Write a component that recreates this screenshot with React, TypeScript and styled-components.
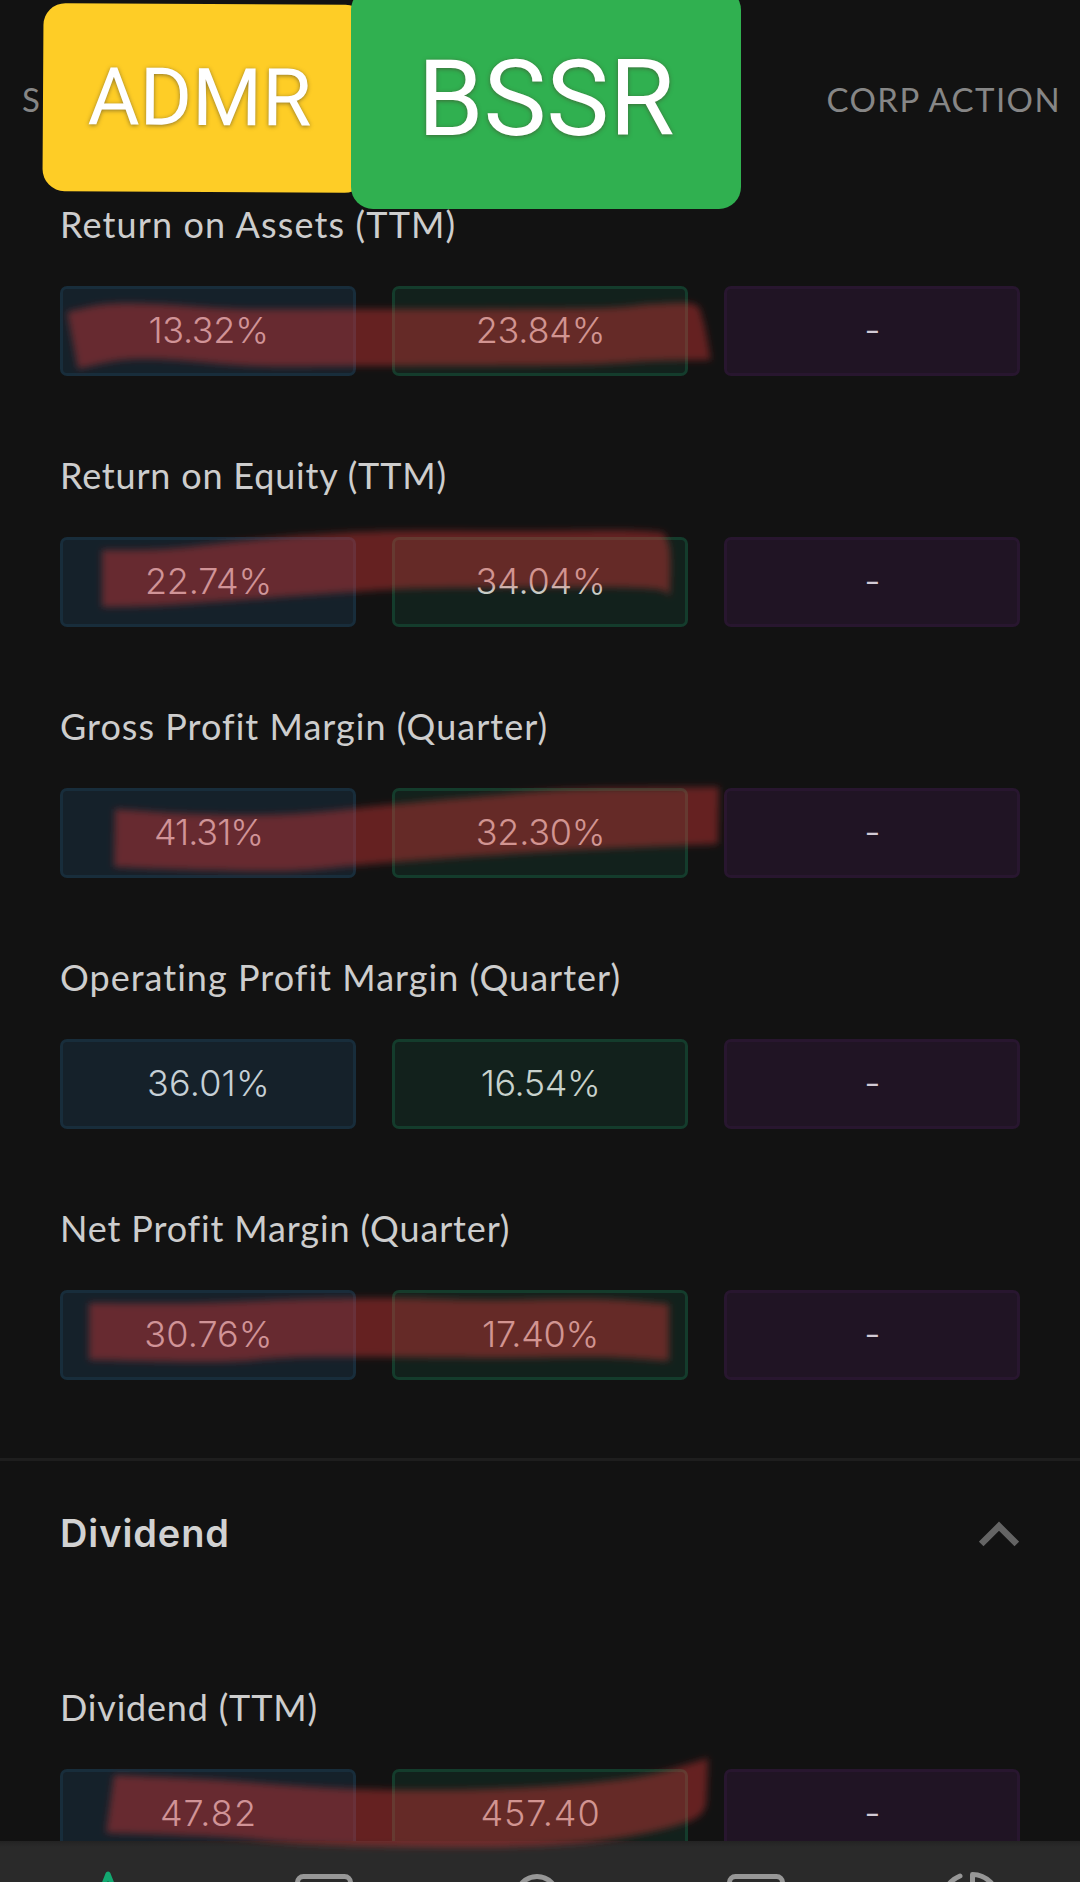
import React from 'react';
import styled, { createGlobalStyle } from 'styled-components';

const GlobalStyle = createGlobalStyle`
  html, body { margin: 0; background: #121212; }
  body { overflow: hidden; }
  * { box-sizing: border-box; }
`;

const Screen = styled.main`
  position: relative;
  display: flex;
  flex-direction: column;
  width: 1080px;
  height: 1882px;
  overflow: hidden;
  background: #121212;
  color: #cdcdcd;
  font-family: Lato, 'Open Sans', sans-serif;
`;

const TabBar = styled.header`
  display: flex;
  flex: none;
  justify-content: space-between;
  align-items: center;
  height: 199px;
  padding: 0 19px 1px 22px;
`;

const Tab = styled.span`
  font-size: 33px;
  line-height: 40px;
  letter-spacing: 1.4px;
  color: #868686;
  white-space: nowrap;
`;

const Content = styled.div`
  display: flex;
  flex: 1;
  flex-direction: column;
  min-height: 0;
  overflow: hidden;
`;

const MetricGroup = styled.section`
  display: flex;
  flex: none;
  flex-direction: column;
  gap: 60px;
  padding: 0 60px;
`;

const Metric = styled.article`
  display: flex;
  flex-direction: column;
  gap: 37px;
  height: 191px;
`;

const MetricLabel = styled.h3<{ $tracking: number }>`
  flex: none;
  margin: 0;
  height: 50px;
  font-size: 36px;
  font-weight: 400;
  line-height: 50px;
  letter-spacing: ${(p) => p.$tracking}px;
  white-space: nowrap;
`;

const ValueRow = styled.div`
  display: grid;
  grid-template-columns: repeat(3, 296px);
  column-gap: 36px;
`;

type Tone = 'blue' | 'green' | 'purple';

const tones: Record<Tone, { fill: string; edge: string; text: string }> = {
  blue: { fill: '#15212a', edge: '#182d3b', text: '#c6d0d6' },
  green: { fill: '#12211c', edge: '#143c2c', text: '#c8d2cc' },
  purple: { fill: '#201424', edge: '#28162f', text: '#d3cbd6' },
};

const ValueBox = styled.div<{ $tone: Tone; $tracking?: number }>`
  display: flex;
  align-items: center;
  justify-content: center;
  height: 90px;
  padding: 0 0 2px 1px;
  border: 3px solid ${(p) => tones[p.$tone].edge};
  border-radius: 7px;
  background: ${(p) => tones[p.$tone].fill};
  color: ${(p) => tones[p.$tone].text};
  font-family: Inter, sans-serif;
  font-size: 36px;
  font-weight: 350;
  line-height: 44px;
  letter-spacing: ${(p) => p.$tracking ?? 0}px;
`;

const SectionHeader = styled.div`
  display: flex;
  flex: none;
  align-items: center;
  justify-content: space-between;
  height: 149px;
  margin-top: 64px;
  padding: 0 61px 0 60px;
  border-top: 3px solid #1e1e1e;
`;

const SectionTitle = styled.h2`
  margin: 0;
  padding-bottom: 2px;
  font-family: Inter, sans-serif;
  font-size: 38px;
  font-weight: 600;
  line-height: 48px;
  letter-spacing: 0.9px;
  color: #d2d2d2;
`;

const DividendGroup = styled(MetricGroup)`
  margin-top: 75px;
`;

const BottomNav = styled.nav`
  display: grid;
  flex: none;
  grid-template-columns: repeat(5, 216px);
  justify-items: center;
  height: 41px;
  padding-top: 29px;
  overflow: hidden;
  background: linear-gradient(#232323, #2a2a2a 6px);
`;

const NavIcon = styled.svg<{ $active?: boolean }>`
  display: block;
  width: 64px;
  height: 64px;
  fill: none;
  stroke: ${(p) => (p.$active ? '#12a870' : '#979797')};
  stroke-width: 5;
  stroke-linejoin: round;
  stroke-linecap: round;
`;

const Sticker = styled.div<{ $x: number; $y: number; $w: number; $h: number; $bg: string; $size: number; $turn?: number; $inset?: number }>`
  position: absolute;
  left: ${(p) => p.$x}px;
  top: ${(p) => p.$y}px;
  display: flex;
  align-items: center;
  justify-content: center;
  width: ${(p) => p.$w}px;
  height: ${(p) => p.$h}px;
  padding-right: ${(p) => p.$inset ?? 0}px;
  border-radius: 22px;
  background: ${(p) => p.$bg};
  color: #fff;
  font-family: Roboto, sans-serif;
  font-size: ${(p) => p.$size}px;
  line-height: 1;
  text-shadow: 0 1px 4px rgba(70, 60, 40, 0.6);
  transform: rotate(${(p) => p.$turn ?? 0}deg);
`;

const MarkerLayer = styled.svg`
  position: absolute;
  inset: 0;
  width: 1080px;
  height: 1882px;
  pointer-events: none;
`;

interface MetricData {
  label: string;
  tracking: number;
  values: [string, number][];
}

const profitability: MetricData[] = [
  { label: 'Return on Assets (TTM)', tracking: 1.13, values: [['13.32%', -0.3], ['23.84%', -0.2]] },
  { label: 'Return on Equity (TTM)', tracking: 0.8, values: [['22.74%', -0.2], ['34.04%', -0.2]] },
  { label: 'Gross Profit Margin (Quarter)', tracking: 1.02, values: [['41.31%', -1], ['32.30%', -0.2]] },
  { label: 'Operating Profit Margin (Quarter)', tracking: 1.03, values: [['36.01%', 0.2], ['16.54%', -0.4]] },
  { label: 'Net Profit Margin (Quarter)', tracking: 0.85, values: [['30.76%', 0.1], ['17.40%', -0.3]] },
];

const dividend: MetricData[] = [
  { label: 'Dividend (TTM)', tracking: 0.8, values: [['47.82', 1.1], ['457.40', 0.9]] },
];

type Point = [number, number];

// Each marker stroke is an upper edge (left to right) and a lower edge (right to left).
const strokes: [Point[], Point[]][] = [
  [
    [[67, 312], [107, 304], [157, 304], [240, 309], [356, 309], [480, 309], [603, 308], [653, 304], [693, 304], [703, 320], [711, 360]],
    [[711, 360], [653, 361], [570, 365], [370, 366], [257, 366], [173, 360], [123, 360], [78, 369]],
  ],
  [
    [[102, 550], [165, 549], [241, 541], [308, 535], [397, 531], [520, 531], [643, 531], [668, 542], [670, 596]],
    [[670, 596], [638, 588], [442, 588], [352, 592], [241, 600], [152, 606], [102, 607]],
  ],
  [
    [[115, 809], [196, 814], [290, 814], [397, 804], [486, 796], [576, 789], [719, 787]],
    [[718, 844], [576, 850], [464, 857], [361, 865], [290, 871], [196, 870], [114, 867]],
  ],
  [
    [[89, 1303], [196, 1303], [308, 1299], [397, 1298], [486, 1300], [598, 1299], [669, 1304]],
    [[669, 1361], [598, 1357], [486, 1358], [308, 1357], [219, 1362], [89, 1360]],
  ],
  [
    [[114, 1775], [219, 1780], [330, 1788], [442, 1790], [553, 1786], [643, 1776], [708, 1758]],
    [[707, 1790], [696, 1818], [620, 1838], [531, 1846], [419, 1847], [308, 1844], [219, 1837], [106, 1833]],
  ],
];

function curve(points: Point[]): string {
  return points
    .slice(1)
    .map((p, i) => {
      const before = points[Math.max(i - 1, 0)];
      const from = points[i];
      const after = points[Math.min(i + 2, points.length - 1)];
      const c1 = [from[0] + (p[0] - before[0]) / 6, from[1] + (p[1] - before[1]) / 6];
      const c2 = [p[0] - (after[0] - from[0]) / 6, p[1] - (after[1] - from[1]) / 6];
      return `C${c1.join(' ')} ${c2.join(' ')} ${p.join(' ')}`;
    })
    .join('');
}

function MetricItem({ data }: { data: MetricData }) {
  const order: Tone[] = ['blue', 'green'];
  return (
    <Metric>
      <MetricLabel $tracking={data.tracking}>{data.label}</MetricLabel>
      <ValueRow>
        {data.values.map(([text, tracking], i) => (
          <ValueBox key={text} $tone={order[i]} $tracking={tracking}>
            {text}
          </ValueBox>
        ))}
        <ValueBox $tone="purple">-</ValueBox>
      </ValueRow>
    </Metric>
  );
}

export default function App() {
  return (
    <Screen>
      <GlobalStyle />
      <TabBar>
        <Tab>S</Tab>
        <Tab>CORP ACTION</Tab>
      </TabBar>
      <Content>
        <MetricGroup>
          {profitability.map((m) => (
            <MetricItem key={m.label} data={m} />
          ))}
        </MetricGroup>
        <SectionHeader>
          <SectionTitle>Dividend</SectionTitle>
          <svg width="40" height="26" viewBox="0 0 40 26" fill="none" stroke="#646464" strokeWidth="6.5">
            <path d="M2.2 23 L20 5.2 L37.8 23" />
          </svg>
        </SectionHeader>
        <DividendGroup>
          {dividend.map((m) => (
            <MetricItem key={m.label} data={m} />
          ))}
        </DividendGroup>
      </Content>
      <BottomNav>
        <NavIcon viewBox="0 0 64 64" $active>
          <path d="M32 4 L12 54 L32 44 L52 54 Z" />
        </NavIcon>
        <NavIcon viewBox="0 0 64 64">
          <rect x="5.5" y="6.5" width="53" height="48" rx="6" />
        </NavIcon>
        <NavIcon viewBox="0 0 64 64">
          <circle cx="29" cy="27" r="20.5" />
        </NavIcon>
        <NavIcon viewBox="0 0 64 64">
          <rect x="5.5" y="6.5" width="53" height="48" rx="6" />
        </NavIcon>
        <NavIcon viewBox="0 0 64 64">
          <path d="M20 6 A27 27 0 1 0 54 44" />
          <path d="M32.5 4.5 V30 H58 A26 26 0 0 0 32.5 4.5 Z" />
        </NavIcon>
      </BottomNav>
      <MarkerLayer viewBox="0 0 1080 1882">
        <defs>
          <filter id="soften" x="-5%" y="-20%" width="110%" height="140%">
            <feGaussianBlur stdDeviation="3.6" />
          </filter>
        </defs>
        {strokes.map(([upper, lower], i) => (
          <path
            key={i}
            d={`M${upper[0].join(' ')}${curve(upper)}L${lower[0].join(' ')}${curve(lower)}Z`}
            fill="rgba(225, 58, 56, 0.4)"
            filter="url(#soften)"
          />
        ))}
      </MarkerLayer>
      <Sticker $x={43} $y={4} $w={324} $h={188} $bg="#fecd26" $size={80} $turn={0.35} $inset={11}>
        ADMR
      </Sticker>
      <Sticker $x={351} $y={-12} $w={390} $h={221} $bg="#30b050" $size={106}>
        BSSR
      </Sticker>
    </Screen>
  );
}
